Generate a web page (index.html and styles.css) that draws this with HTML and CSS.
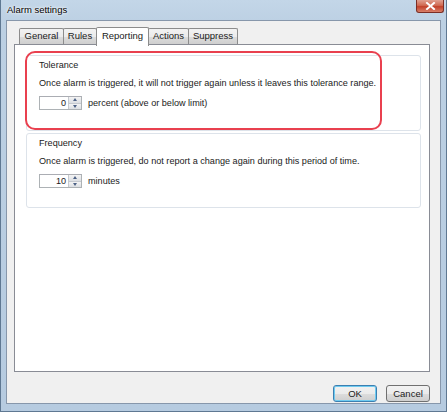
FILE: index.html
```html
<!DOCTYPE html>
<html>
<head>
<meta charset="utf-8">
<link rel="stylesheet" href="styles.css">
</head>
<body>
<div class="window">
  <div class="titlebar">
    <span class="title">Alarm settings</span>
    <div class="close"><svg width="11" height="8" viewBox="0 0 11 8"><path d="M2 1 L9 7 M9 1 L2 7" stroke="#fff" stroke-width="2" stroke-linecap="square"/></svg></div>
  </div>
  <div class="client">
    <div class="tabs">
      <div class="tab t-general">General</div>
      <div class="tab t-rules">Rules</div>
      <div class="tab t-reporting active">Reporting</div>
      <div class="tab t-actions">Actions</div>
      <div class="tab t-suppress">Suppress</div>
    </div>
    <div class="panel">
      <div class="group g1">
        <div class="label">Tolerance</div>
        <div class="desc">Once alarm is triggered, it will not trigger again unless it leaves this tolerance range.</div>
        <div class="row">
          <div class="spin"><span class="val">0</span><span class="arrows"><span class="up"></span><span class="down"></span></span></div>
          <span class="unit">percent (above or below limit)</span>
        </div>
      </div>
      <div class="group g2">
        <div class="label">Frequency</div>
        <div class="desc">Once alarm is triggered, do not report a change again during this period of time.</div>
        <div class="row">
          <div class="spin"><span class="val">10</span><span class="arrows"><span class="up"></span><span class="down"></span></span></div>
          <span class="unit">minutes</span>
        </div>
      </div>
      <div class="highlight"></div>
    </div>
    <div class="footer">
      <div class="btn ok">OK</div>
      <div class="btn">Cancel</div>
    </div>
  </div>
</div>
</body>
</html>
```
FILE: styles.css
```css
html, body { margin: 0; padding: 0; }
body { font-family: "Liberation Sans", Arial, sans-serif; font-size: 9.1px; color: #1a1a1a; }
.window {
  width: 447px; height: 412px; box-sizing: border-box;
  padding: 0 5px 7px 5px;
  display: flex; flex-direction: column;
  background: linear-gradient(180deg, #c3d6e8 0%, #bcd0e3 6%, #b6cbe0 100%);
  border: 1px solid #5f7892;
  border-top: none;
}
.titlebar { height: 20px; display: flex; justify-content: space-between; flex-shrink: 0; }
.title { font-size: 9.5px; color: #000; padding-left: 1px; line-height: 19px; text-shadow: 0 0 4px #fff, 0 0 2px #fff; }
.close {
  width: 28px; height: 13px; box-sizing: border-box; margin-right: -3px;
  background: linear-gradient(180deg, #e0a090 0%, #d06a52 45%, #c2412a 55%, #d8806a 100%);
  border: 1px solid #7b2e25; border-top: none; border-radius: 0 0 3px 3px;
  display: flex; align-items: center; justify-content: center;
}
.client {
  flex: 1; background: #f0f0f0; border: 1px solid #8797ab;
  display: flex; flex-direction: column;
  padding: 6px 10px 0 7px;
}
.tabs { display: flex; height: 17px; margin-left: 5px; align-items: flex-end; position: relative; z-index: 1; }
.tab {
  height: 16px; box-sizing: border-box; text-align: center; line-height: 14px;
  border: 1px solid #8c8c8c; border-bottom: none; margin-right: -1px;
  background: linear-gradient(180deg, #f2f2f2 0%, #ebebeb 50%, #dcdcdc 51%, #cfcfcf 100%);
  border-radius: 2px 2px 0 0; font-size: 9.5px;
}
.t-general { width: 45px; }
.t-rules { width: 34px; }
.t-reporting { width: 53px; }
.t-actions { width: 41px; }
.t-suppress { width: 50px; }
.tab.active { height: 19px; margin-bottom: -2px; background: #fff; line-height: 16px; position: relative; }
.panel {
  height: 328px; box-sizing: border-box; background: #fff; border: 1px solid #898c95;
  padding: 10px 8px 0 11px; position: relative; flex-shrink: 0;
}
.group { border: 1px solid #dde3ea; border-radius: 3px; padding: 3px 0 0 12px; box-sizing: border-box; }
.g1 { height: 76px; margin-bottom: 2px; }
.g2 { height: 75px; }
.label { line-height: 12px; }
.desc { margin-top: 6px; line-height: 12px; }
.row { display: flex; align-items: center; margin-top: 7px; }
.spin { width: 43px; height: 14px; box-sizing: border-box; border: 1px solid #adb2b5; border-top-color: #abadb3; display: flex; background: #fff; }
.val { flex: 1; text-align: right; line-height: 12px; padding-right: 2px; }
.arrows { width: 12px; display: flex; flex-direction: column; border-left: 1px solid #c5c9cf; }
.arrows span { flex: 1; background: linear-gradient(#f4f4f4, #dcdfe3); display: flex; align-items: center; justify-content: center; position: relative; }
.up { border-bottom: 1px solid #c5c9cf; }
.up::after { content: ""; border: 2px solid transparent; border-bottom: 3px solid #4d6185; border-top: none; }
.down::after { content: ""; border: 2px solid transparent; border-top: 3px solid #4d6185; border-bottom: none; }
.unit { margin-left: 6px; }
.highlight {
  position: absolute; left: 10px; top: 6px; width: 357px; height: 79px; box-sizing: border-box;
  border: 2px solid #e9404f; border-radius: 10px;
}
.footer { flex: 1; display: flex; justify-content: flex-end; align-items: flex-start; padding-top: 13px; gap: 9px; }
.btn {
  width: 44px; height: 17px; box-sizing: border-box; border: 1px solid #707070; border-radius: 3px;
  background: linear-gradient(180deg, #f2f2f2 0%, #ebebeb 50%, #dddddd 51%, #cfcfcf 100%);
  text-align: center; line-height: 15px; font-size: 9.5px;
}
.btn.ok { border-color: #3c7fb1; box-shadow: inset 0 0 0 1px #6fcbf0; }
```
